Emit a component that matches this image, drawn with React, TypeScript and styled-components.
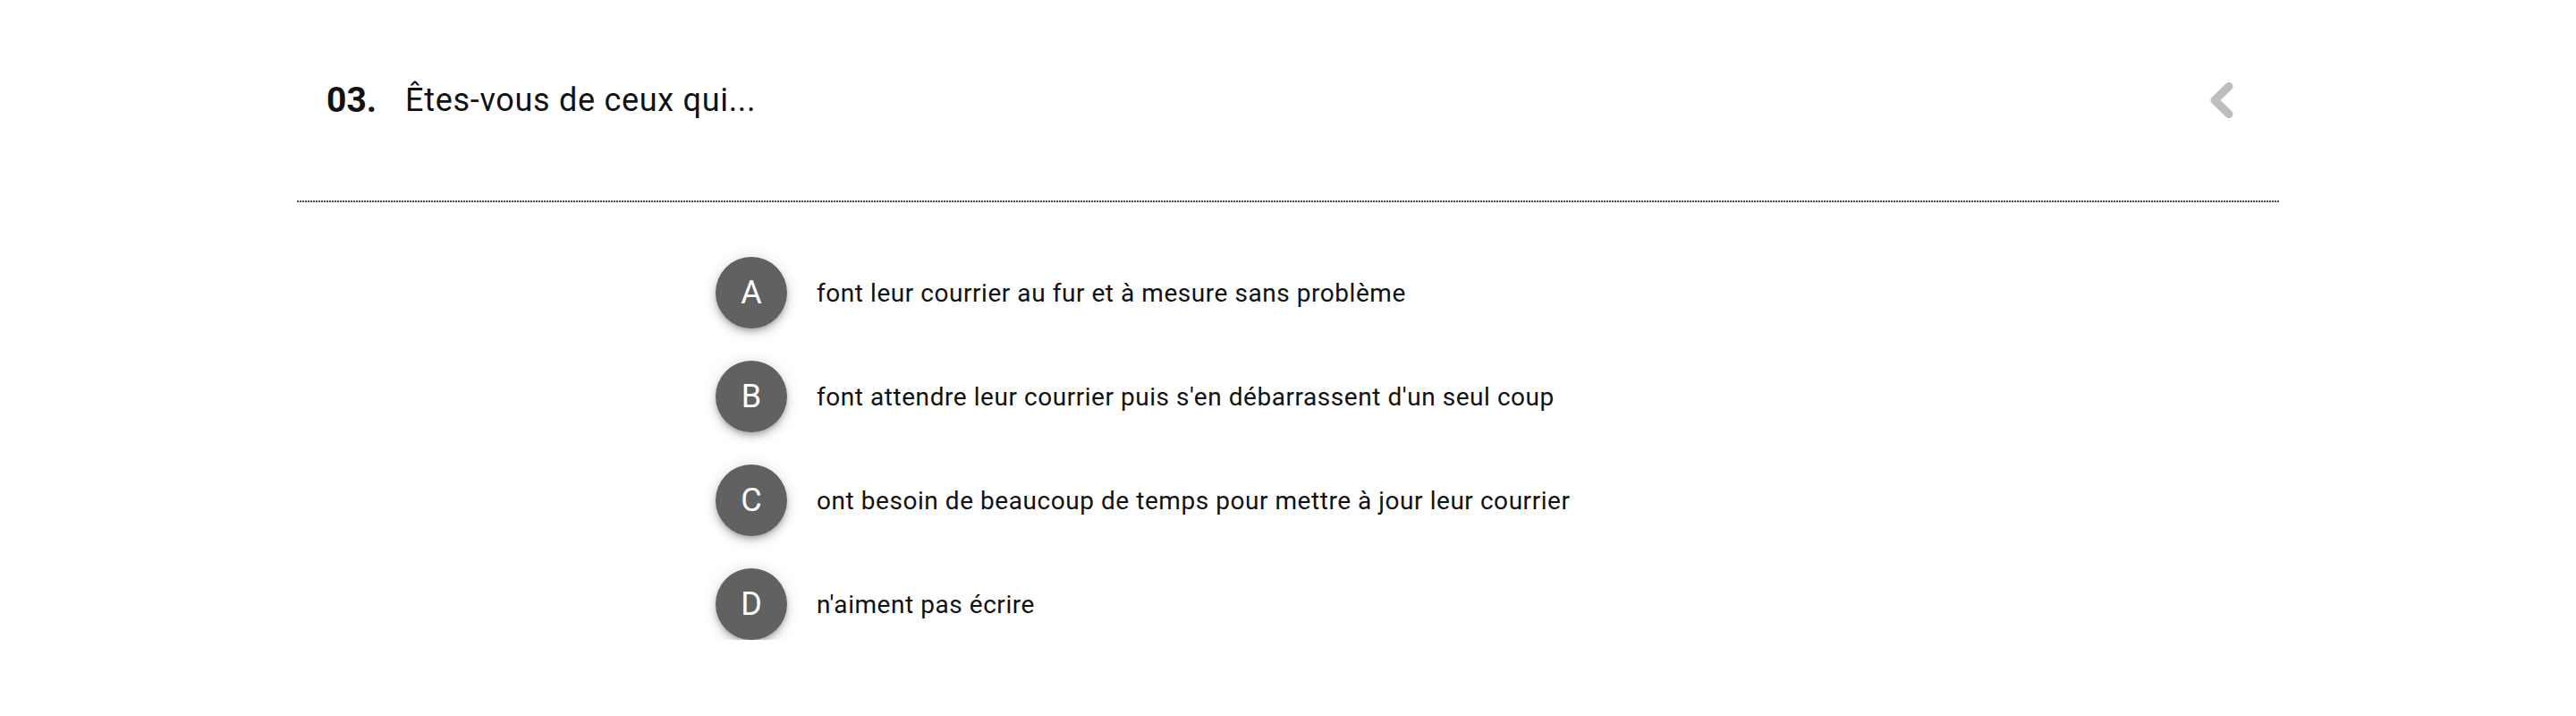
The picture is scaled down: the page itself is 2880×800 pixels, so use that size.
import React from 'react';
import styled, { createGlobalStyle } from 'styled-components';

const OPTIONS = [
  { key: 'A', label: 'font leur courrier au fur et à mesure sans problème' },
  { key: 'B', label: "font attendre leur courrier puis s'en débarrassent d'un seul coup" },
  { key: 'C', label: 'ont besoin de beaucoup de temps pour mettre à jour leur courrier' },
  { key: 'D', label: "n'aiment pas écrire" },
];

const App = () => {
  return (
    <>
      <GlobalStyle />
      <QuestionCard>
        <QuestionHeader>
          <QuestionNumber>03.</QuestionNumber>
          <QuestionTitle>Êtes-vous de ceux qui...</QuestionTitle>
          <BackButton aria-label="Précédent">
            <svg width="26" height="40" viewBox="0 0 26 40">
              <path
                d="M21 4.5 L5 20 L21 35.5"
                fill="none"
                stroke="#bdbdbd"
                strokeWidth="9"
                strokeLinecap="round"
                strokeLinejoin="round"
              />
            </svg>
          </BackButton>
        </QuestionHeader>
        <Divider />
        <OptionList>
          {OPTIONS.map((o) => (
            <OptionRow key={o.key}>
              <OptionBadge>{o.key}</OptionBadge>
              <OptionLabel>{o.label}</OptionLabel>
            </OptionRow>
          ))}
        </OptionList>
      </QuestionCard>
    </>
  );
};

const GlobalStyle = createGlobalStyle`
  body {
    margin: 0;
    background: #fff;
    font-family: Roboto, "Liberation Sans", sans-serif;
  }
`;

const QuestionCard = styled.section`
  width: 2216px;
  margin: 0 auto;
`;

const QuestionHeader = styled.header`
  display: flex;
  align-items: center;
  height: 224px;
  padding: 0 51px 0 33px;
  box-sizing: border-box;
`;

const QuestionNumber = styled.span`
  font-size: 39px;
  font-weight: 700;
  color: #111;
  margin-right: 32px;
`;

const QuestionTitle = styled.h2`
  flex: 1;
  margin: 0;
  font-size: 36px;
  font-weight: 400;
  letter-spacing: 0.7px;
  color: #111;
`;

const BackButton = styled.button`
  display: flex;
  align-items: center;
  justify-content: center;
  padding: 0;
  border: none;
  background: none;
  cursor: pointer;
`;

const Divider = styled.hr`
  margin: 0;
  border: none;
  height: 2px;
  background-image: repeating-linear-gradient(
    to right,
    #4a4a4a 0,
    #4a4a4a 2px,
    transparent 2px,
    transparent 3px
  );
`;

const OptionList = styled.ul`
  list-style: none;
  margin: 0;
  padding: 61px 0 0 468px;
  display: flex;
  flex-direction: column;
  gap: 36px;
`;

const OptionRow = styled.li`
  display: flex;
  align-items: center;
  gap: 33px;
`;

const OptionBadge = styled.span`
  display: flex;
  align-items: center;
  justify-content: center;
  width: 80px;
  height: 80px;
  border-radius: 50%;
  background: #616161;
  color: #fff;
  font-size: 36px;
  font-weight: 400;
  box-shadow: 0 3px 5px -1px rgba(0, 0, 0, 0.2), 0 6px 10px 0 rgba(0, 0, 0, 0.14),
    0 1px 18px 0 rgba(0, 0, 0, 0.12);
`;

const OptionLabel = styled.span`
  font-size: 28px;
  color: #111;
  letter-spacing: 0.55px;
`;

export default App;
